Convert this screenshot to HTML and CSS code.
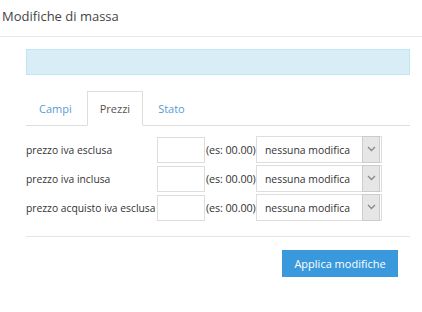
FILE: index.html
```html
<!DOCTYPE html>
<html lang="it">
<head>
  <meta charset="UTF-8">
  <title>Modifiche di massa</title>
  <link rel="stylesheet" href="styles.css">
</head>
<body>
  <div class="modal-header">
    <h4>Modifiche di massa</h4>
  </div>
  <div class="modal-body">
    <div class="alert"></div>
    <ul class="tabs">
      <li><a href="#">Campi</a></li>
      <li class="active"><a href="#">Prezzi</a></li>
      <li><a href="#">Stato</a></li>
    </ul>
    <div class="rows">
      <div class="row">
        <label>prezzo iva esclusa</label>
        <input type="text">
        <span class="hint">(es: 00.00)</span>
        <div class="select"><span>nessuna modifica</span><i class="arrow"><svg width="9" height="6" viewBox="0 0 9 6"><path d="M1 1l3.5 3.5L8 1" fill="none" stroke="#888" stroke-width="1.3"/></svg></i></div>
      </div>
      <div class="row">
        <label>prezzo iva inclusa</label>
        <input type="text">
        <span class="hint">(es: 00.00)</span>
        <div class="select"><span>nessuna modifica</span><i class="arrow"><svg width="9" height="6" viewBox="0 0 9 6"><path d="M1 1l3.5 3.5L8 1" fill="none" stroke="#888" stroke-width="1.3"/></svg></i></div>
      </div>
      <div class="row">
        <label>prezzo acquisto iva esclusa</label>
        <input type="text">
        <span class="hint">(es: 00.00)</span>
        <div class="select"><span>nessuna modifica</span><i class="arrow"><svg width="9" height="6" viewBox="0 0 9 6"><path d="M1 1l3.5 3.5L8 1" fill="none" stroke="#888" stroke-width="1.3"/></svg></i></div>
      </div>
    </div>
    <div class="footer">
      <button>Applica modifiche</button>
    </div>
  </div>
</body>
</html>
```
FILE: styles.css
```css
*{margin:0;padding:0;box-sizing:border-box}
body{font-family:"Open Sans",sans-serif;color:#333;background:#fff;width:422px;height:312px;overflow:hidden}
.modal-header{height:37px;border-bottom:1px solid #e8e8e8;padding:6px 0 0 2px}
.modal-header h4{font-size:13px;font-weight:400;color:#444;line-height:20px}
.modal-body{padding:12px 12px 0 26px}
.alert{height:26px;background:#d9edf7;border:1px solid #bce8f1}
.tabs{list-style:none;display:flex;margin-top:16px;border-bottom:1px solid #ddd;height:35px;padding-left:0}
.tabs li{margin-bottom:-1px}
.tabs a{display:block;height:35px;line-height:33px;padding:0 12px;margin-right:2px;font-size:11px;color:#5a9bd5;text-decoration:none;border:1px solid transparent}
.tabs .active a{color:#555;border-color:#ddd;border-bottom-color:#fff;background:#fff}
.rows{padding-top:9px}
.row{display:flex;align-items:center;height:29px;font-size:10.3px}
.row label{width:131px;color:#333;white-space:nowrap}
.row input{width:48px;height:26px;border:1px solid #ddd}
.hint{width:51px;padding-left:1px;color:#333;white-space:nowrap;font-size:10.8px;letter-spacing:-0.1px}
.select{width:126px;height:27px;border:1px solid #ddd;display:flex;align-items:center;justify-content:space-between;padding:0 1px 0 8px}
.select span{color:#333;font-size:10.4px}
.arrow{width:18px;height:27px;margin-top:-2px;margin-bottom:-1px;background:#e6e6e6;border:1px solid #ccc;display:flex;align-items:center;justify-content:center}
.footer{margin-top:14px;border-top:1px solid #e5e5e5;padding-top:13px;display:flex;justify-content:flex-end;padding-right:12px}
.footer button{background:#3a99dc;color:#fff;border:0;font-family:"Open Sans",sans-serif;font-size:11px;height:27px;width:116px}
```
